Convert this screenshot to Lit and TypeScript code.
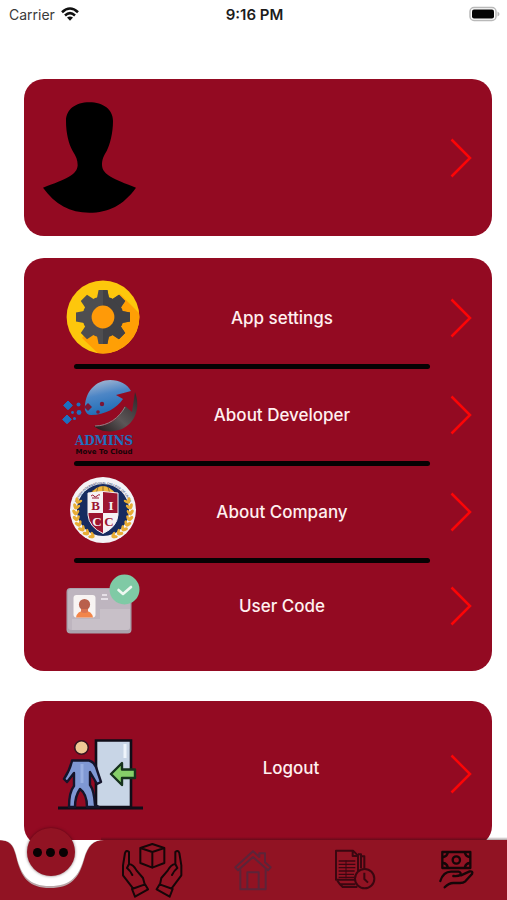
import { LitElement, html, css, svg } from "lit";
import { customElement } from "lit/decorators.js";

const gear = html`
  <svg class="art" width="80" height="80" viewBox="8 8 80 80" aria-hidden="true">
    <defs>
      <clipPath id="disc"><circle cx="48" cy="47" r="36.4" /></clipPath>
      <clipPath id="right-half"><rect x="48" y="10" width="40" height="80" /></clipPath>
      <g id="cog">
        <circle cx="48" cy="47" r="20.5" />
        ${[0, 45, 90, 135, 180, 225, 270, 315].map(
          (a) => svg`<path d="M42 28 L43.6 20 H52.4 L54 28Z" transform="rotate(${a} 48 47)" />`
        )}
      </g>
    </defs>
    <circle cx="48" cy="47" r="36.4" fill="#fdc70c" />
    <g clip-path="url(#disc)">
      <path d="M65 24 L90 49 V90 H50 L27 68Z" fill="#ff9f05" />
      <use href="#cog" fill="#4e4e50" />
      <g clip-path="url(#right-half)"><use href="#cog" fill="#414145" /></g>
      <circle cx="48" cy="47" r="11.4" fill="#ff9a08" />
    </g>
  </svg>`;

const admins = html`
  <svg class="art" width="90" height="90" viewBox="3 0 90 90" aria-hidden="true">
    <defs>
      <linearGradient id="globe" x1="0.3" y1="0" x2="0.6" y2="1">
        <stop offset="0" stop-color="#a3b6d2" />
        <stop offset="0.4" stop-color="#4d86c6" />
        <stop offset="1" stop-color="#1769b3" />
      </linearGradient>
      <linearGradient id="swoosh" x1="1" y1="0" x2="0" y2="1">
        <stop offset="0" stop-color="#2c2427" />
        <stop offset="0.55" stop-color="#5b5657" />
        <stop offset="1" stop-color="#1d1416" />
      </linearGradient>
    </defs>
    <path d="M30 40 C29 22 41 10 55 10 C65 10 72 14 76 21 L61 25 L68 29 C62 38 50 45 36 45 C33 45 31 43 30 40Z" fill="url(#globe)" />
    <path d="M80 22 C86 38 80 53 67 59 C57 63 45 62 39 56 C54 57 64 49 70 36 L77 42Z" fill="url(#swoosh)" />
    <path d="M40 56 C53 56 64 48 70 37" fill="none" stroke="#8e8587" stroke-width="1" />
    <path d="M33 33 l4 4 -4 4 -4 -4Z" fill="#7c1636" />
    <circle cx="47" cy="34" r="2.2" fill="#7c1636" />
    <circle cx="43" cy="42" r="1.8" fill="#7c1636" />
    <g fill="#1d6fc0">
      <path d="M13 31 l4.4 4.4 -4.4 4.4 -4.4 -4.4Z" stroke="#1d6fc0" stroke-width="1" />
      <path d="M12 45 l4.4 4.4 -4.4 4.4 -4.4 -4.4Z" stroke="#1d6fc0" stroke-width="1" />
      <circle cx="23.5" cy="34.5" r="2" />
      <circle cx="24" cy="42.5" r="2.4" />
      <circle cx="17.5" cy="42.5" r="1.4" />
      <circle cx="19.5" cy="48.5" r="1.5" />
    </g>
    <text class="mark" x="49" y="75" text-anchor="middle">ADMINS</text>
    <text class="motto" x="49" y="84" text-anchor="middle">Move To Cloud</text>
  </svg>`;

const leaves = [205, 192, 179, 166, 153, 140, 127, 114];

const college = html`
  <svg class="art" width="68" height="72" viewBox="14 11 68 72" aria-hidden="true">
    <defs>
      <path id="rim" d="M20 47 A28 28 0 1 1 76 47" />
      <clipPath id="shield">
        <path d="M33 28 Q48 25 63 28 V50 Q62 62 48 68.5 Q34 62 33 50Z" />
      </clipPath>
    </defs>
    <circle cx="48" cy="45" r="33" fill="#f4f3f6" />
    <circle cx="48" cy="45" r="26" fill="#162b60" />
    <path d="M35 29 Q48 13 61 29Z" fill="#f0b73b" />
    <path d="M48 21 V29 M43 22 L41 29 M53 22 L55 29 M38 25 L36 29" stroke="#7a5a25" stroke-width="0.8" />
    <text class="rim-text"><textPath href="#rim" startOffset="50%" text-anchor="middle">BRITISH INTERNATIONAL COLLEGE OF CAIRO</textPath></text>
    <g clip-path="url(#shield)">
      <rect x="32" y="24" width="16" height="24" fill="#f6f1f3" />
      <rect x="48" y="24" width="16" height="24" fill="#9c1430" />
      <rect x="32" y="48" width="16" height="22" fill="#9c1430" />
      <rect x="48" y="48" width="16" height="22" fill="#f6f1f3" />
    </g>
    <path d="M33 28 Q48 25 63 28 V50 Q62 62 48 68.5 Q34 62 33 50Z" fill="none" stroke="#f6f1f3" stroke-width="1" />
    <path d="M36 31 q2 -2 3 0 t3 0 t3 -1 M37 33 h7" fill="none" stroke="#9c1430" stroke-width="1" />
    <text class="crest red" x="40.5" y="45" text-anchor="middle">B</text>
    <text class="crest" x="56" y="45" text-anchor="middle">I</text>
    <text class="crest" x="42" y="61" text-anchor="middle">C</text>
    <text class="crest red" x="54" y="61" text-anchor="middle">C</text>
    <g fill="#e8ad35">
      ${leaves.map((a) => {
        const r = (a * Math.PI) / 180;
        const dx = 28.5 * Math.cos(r);
        const dy = 28.5 * Math.sin(r);
        return svg`
          <ellipse cx="${48 + dx}" cy="${47 + dy * 0.95}" rx="3.2" ry="1.7" transform="rotate(${a + 60} ${48 + dx} ${47 + dy * 0.95})" />
          <ellipse cx="${48 + dx * 0.9}" cy="${47 + dy * 0.86}" rx="2.8" ry="1.4" transform="rotate(${a + 125} ${48 + dx * 0.9} ${47 + dy * 0.86})" />
          <ellipse cx="${48 - dx}" cy="${47 + dy * 0.95}" rx="3.2" ry="1.7" transform="rotate(${120 - a} ${48 - dx} ${47 + dy * 0.95})" />
          <ellipse cx="${48 - dx * 0.9}" cy="${47 + dy * 0.86}" rx="2.8" ry="1.4" transform="rotate(${55 - a} ${48 - dx * 0.9} ${47 + dy * 0.86})" />`;
      })}
    </g>
    <path d="M30 72 Q48 80 66 72" fill="none" stroke="#f4f3f6" stroke-width="1" />
  </svg>`;

const idCard = html`
  <svg class="art" width="80" height="80" viewBox="8 1 80 80" aria-hidden="true">
    <rect x="11.5" y="23" width="65" height="45.5" rx="4" fill="#aaa3ad" />
    <rect x="13" y="24" width="62" height="41" rx="3" fill="#beb5bf" />
    <path d="M45 44 H75 V62 Q75 65 72 65 H17 V54 H45Z" fill="#c8c0c8" />
    <rect x="18.5" y="30" width="22" height="22.5" rx="3" fill="#f8f4f3" />
    <path d="M21 52.5 Q22 46 29.5 45.5 Q37 46 38 52.5Z" fill="#f28549" />
    <circle cx="29.5" cy="39.5" r="5.6" fill="#b9604c" />
    <path d="M26 44 H33 V47 Q29.5 49 26 47Z" fill="#d97452" />
    <path d="M47 30 h5 M46 34 h7" stroke="#e6e0e7" stroke-width="2" />
    <circle cx="69.5" cy="24.5" r="15" fill="#7fcaa5" />
    <path d="M63.5 25 L68 29 L76 22" fill="none" stroke="#eef8f1" stroke-width="2.6" stroke-linecap="round" stroke-linejoin="round" />
  </svg>`;

const exit = html`
  <svg class="art" width="90" height="90" viewBox="13 3 90 90" aria-hidden="true">
    <path d="M51 81 V14.5 H86 V81Z" fill="#c8d5e6" stroke="#100d18" stroke-width="2.6" />
    <path d="M80 18 V32" stroke="#eef4fb" stroke-width="3" />
    <path d="M11 82 H98" stroke="#100d18" stroke-width="2.8" />
    <path d="M66 48 L77 37 V43.5 H90 V52 H77 V59Z" fill="#86cf69" stroke="#16321c" stroke-width="2.4" stroke-linejoin="round" />
    <path d="M27 34.5 H44 Q49 36 51 41 L56 56 L52 58 L45 46 V59 Q49 64 50 79 L54 81 H42 Q42 68 35 63 Q30 70 30 81 H24 Q24 66 29 60 V47 L22 56 L19 53 Q25 44 27 34.5Z" fill="#7f98d4" stroke="#15142a" stroke-width="2.4" stroke-linejoin="round" />
    <path d="M37 38 V57" stroke="#98afe3" stroke-width="3" />
    <circle cx="36.5" cy="21.5" r="6.8" fill="#efc995" stroke="#3a1420" stroke-width="1.6" />
  </svg>`;

const chevron = html`
  <svg class="chevron" width="22" height="40" viewBox="0 0 22 40" aria-hidden="true">
    <path d="M1.5 1.5 L20 20 L1.5 38.5" fill="none" stroke="#fb0507" stroke-width="2.5" />
  </svg>`;

const avatar = html`
  <svg class="avatar" width="93" height="111" viewBox="69 95 279 333" aria-hidden="true">
    <path d="M208 96 C250 96 279 118 279 152 C279 188 270 222 260 242 C250 258 246 268 246 285 C248 314 280 326 348 352 C310 405 265 427 208 427 C150 427 105 402 69 352 C140 326 171 314 173 285 C173 268 168 258 158 242 C146 220 138 188 138 152 C138 118 166 96 208 96Z" />
  </svg>`;

const hands = html`
  <svg width="62" height="56" viewBox="365 80 186 168" aria-hidden="true">
    <g fill="none" stroke="#150608" stroke-width="6" stroke-linejoin="round" stroke-linecap="round">
      <path d="M459 86 L495 98 V143 L459 157 L423 143 V98Z M423 98 L459 110 L495 98 M459 110 V157" />
      <path d="M401 219 L371 180 V150 L377 113 Q381 103 389 110 V146 Q403 148 412 166 L431 188 L436 207 M389 146 L383 158 Q392 165 399 179 M398 221 L437 207 L446 222 L407 244Z" />
      <path d="M517 219 L546 180 V150 L540 113 Q536 103 528 110 V146 Q514 148 505 166 L486 188 L482 207 M528 146 L534 158 Q525 165 518 179 M520 221 L481 207 L472 222 L511 244Z" />
    </g>
  </svg>`;

const house = html`
  <svg width="42" height="42" viewBox="99 102 126 126" aria-hidden="true">
    <g fill="none" stroke="#5c2439" stroke-width="6" stroke-linejoin="round">
      <path d="M109 157 L162 109 L181 126 V115 H198 V142 L215 157 L207 166 L162 126 L117 166Z" />
      <path d="M124 163 V223 H200 V163 M145 223 V172 H179 V223" />
    </g>
  </svg>`;

const reports = html`
  <svg width="42" height="42" viewBox="402 102 126 126" aria-hidden="true">
    <g fill="none" stroke="#3a0710" stroke-width="6" stroke-linejoin="round">
      <path d="M408 107 H459 L474 122 V194 H408Z M458 107 V123 H474" />
      <path d="M474 118 H483 V160 M483 124 H493 V160 M412 197 L420 208 H466 M420 208 L428 216 H472" />
      <path d="M416 138 H466 M416 148 H466 M416 158 H466 M416 168 H464 M416 178 H462 M416 187 H462" stroke-width="4" />
      <path d="M438 136 V190" stroke-width="3" />
      <circle cx="494" cy="191" r="29" fill="#911323" />
      <path d="M493 173 V192 L504 203" />
    </g>
  </svg>`;

const payment = html`
  <svg width="42" height="42" viewBox="705 102 126 126" aria-hidden="true">
    <g fill="none" stroke="#150608" stroke-width="7" stroke-linejoin="round" stroke-linecap="round">
      <rect x="727" y="111" width="84" height="48" />
      <circle cx="769" cy="135" r="11" />
      <path d="M730 126 Q741 124 743 114 M808 126 Q797 124 795 114 M730 144 Q741 146 743 156 M808 144 Q797 146 795 156" />
      <path d="M721 198 Q730 170 753 170 H776 Q784 172 781 180 Q776 184 760 183 M783 181 L809 169 Q820 168 816 177 L796 199 Q790 204 780 204 H760 Q746 204 734 217" />
    </g>
  </svg>`;

@customElement("app-root")
export class AppRoot extends LitElement {
  static styles = css`
    :host {
      display: block;
      min-height: 100vh;
      background: #fff;
      font-family: Inter, "Liberation Sans", sans-serif;
    }
    * {
      box-sizing: border-box;
    }
    button {
      border: 0;
      margin: 0;
      padding: 0;
      background: none;
      font: inherit;
      color: inherit;
      cursor: pointer;
    }
    svg {
      display: block;
    }
    .status {
      display: grid;
      grid-template-columns: 1fr auto 1fr;
      align-items: center;
      height: 28px;
      padding: 0 7px 0 9px;
      color: #1c1c1c;
    }
    .carrier {
      display: flex;
      align-items: center;
      gap: 6px;
      font-size: 14px;
      color: #3a3a3a;
    }
    .time {
      font-size: 15px;
      font-weight: 600;
    }
    .battery {
      justify-self: end;
    }
    main {
      display: flex;
      flex-direction: column;
      padding: 51px 15px 54px 24px;
    }
    .card {
      border-radius: 20px;
      background: #930a22;
      color: #fff0f0;
    }
    .profile {
      display: flex;
      align-items: center;
      justify-content: space-between;
      width: 100%;
      height: 157px;
      padding: 0 20px 0 19px;
      margin-bottom: 22px;
    }
    .menu {
      list-style: none;
      margin: 0 0 30px;
      padding: 14px 0 22px;
    }
    .row {
      display: grid;
      grid-template-columns: 94px 1fr 58px;
      align-items: center;
      width: 100%;
      height: 92px;
      padding: 0 20px 0 32px;
    }
    .item:last-child .row {
      height: 86px;
    }
    .item:not(:last-child)::after {
      content: "";
      display: block;
      height: 5px;
      margin: 0 62px 0 50px;
      border-radius: 3px;
      background: #060203;
    }
    .art {
      justify-self: center;
    }
    .chevron {
      justify-self: end;
    }
    .label {
      font-size: 17px;
      line-height: 20px;
      font-weight: 500;
      text-align: center;
    }
    .logout {
      grid-template-columns: 94px 1fr 40px;
      height: 145px;
    }
    .logout .label {
      padding-bottom: 12px;
    }
    .mark {
      font: bold 12px "DejaVu Serif", serif;
      fill: #1f70bf;
    }
    .motto {
      font: bold 7px "DejaVu Sans", sans-serif;
      fill: #160407;
    }
    .rim-text {
      font: bold 3px "Liberation Sans", sans-serif;
      fill: #4a5680;
    }
    .crest {
      font: bold 13px "Liberation Serif", serif;
      fill: #f6f1f3;
    }
    .red {
      fill: #9c1430;
    }
    .tabs {
      position: fixed;
      left: 0;
      right: 0;
      bottom: 0;
      display: grid;
      grid-template-columns: repeat(5, 1fr);
      height: 60px;
      background: #911323;
    }
    .tabs::before {
      content: "";
      position: absolute;
      left: 20%;
      right: 0;
      bottom: 100%;
      height: 3px;
      background: linear-gradient(rgba(40, 10, 15, 0), rgba(40, 10, 15, 0.4));
    }
    .tab {
      display: grid;
      place-items: center;
    }
    .current {
      position: relative;
    }
    .notch {
      position: absolute;
      top: 0;
      left: 50%;
      margin-left: -53px;
    }
    .bubble {
      position: absolute;
      top: -12px;
      left: 50%;
      margin-left: -24px;
      display: flex;
      align-items: center;
      justify-content: center;
      gap: 4px;
      width: 48px;
      height: 48px;
      border-radius: 50%;
      background: #911323;
      box-shadow: 0 0 3px rgba(40, 5, 10, 0.6);
    }
    .dot {
      width: 9px;
      height: 9px;
      border-radius: 50%;
      background: #080203;
    }
  `;

  private items = [
    { label: "App settings", icon: gear },
    { label: "About Developer", icon: admins },
    { label: "About Company", icon: college },
    { label: "User Code", icon: idCard },
  ];

  private tabs = [
    { name: "Donations", icon: hands },
    { name: "Home", icon: house },
    { name: "Reports", icon: reports },
    { name: "Payments", icon: payment },
  ];

  render() {
    return html`
      <header class="status">
        <span class="carrier">
          Carrier
          <svg width="18" height="14" viewBox="0 0 18 14" aria-hidden="true">
            <g fill="none" stroke="#111" stroke-width="2.6">
              <path d="M1 5.2 Q9 -2.2 17 5.2" />
              <path d="M4 8.4 Q9 4 14 8.4" />
            </g>
            <path d="M6 10.6 Q9 8.2 12 10.6 L9 13.8Z" fill="#111" />
          </svg>
        </span>
        <span class="time">9:16 PM</span>
        <svg class="battery" width="31" height="16" viewBox="0 0 31 16" aria-hidden="true">
          <rect x="1" y="1.5" width="26" height="13" rx="4" fill="#fff" stroke="#b9b9b9" stroke-width="1.5" />
          <rect x="3" y="3.5" width="22" height="9" rx="2" fill="#050505" />
          <path d="M28.5 5.5 Q30.5 6.5 30.5 8 Q30.5 9.5 28.5 10.5Z" fill="#b9b9b9" />
        </svg>
      </header>
      <main>
        <button class="card profile" aria-label="Profile">${avatar}${chevron}</button>
        <ul class="card menu">
          ${this.items.map(
            (item) => html`
              <li class="item">
                <button class="row">
                  ${item.icon}
                  <span class="label">${item.label}</span>
                  ${chevron}
                </button>
              </li>
            `
          )}
        </ul>
        <button class="card row logout">
          ${exit}
          <span class="label">Logout</span>
          ${chevron}
        </button>
      </main>
      <nav class="tabs">
        <div class="current">
          <svg class="notch" width="106" height="50" viewBox="0 0 106 50" aria-hidden="true">
            <path d="M0 0 C12 0 15 5 18 16 C23 38 31 48 52 48 C73 48 81 38 86 20 C90 6 95 0 106 0Z" fill="#b9a6a8" />
            <path d="M0 0 C12 0 15 4 18 14 C23 36 31 46 52 46 C73 46 81 36 86 18 C90 5 95 0 106 0Z" fill="#fff" />
          </svg>
          <button class="bubble" aria-label="More">
            <span class="dot"></span><span class="dot"></span><span class="dot"></span>
          </button>
        </div>
        ${this.tabs.map(
          (tab) => html`<button class="tab" aria-label=${tab.name}>${tab.icon}</button>`
        )}
      </nav>
    `;
  }
}
